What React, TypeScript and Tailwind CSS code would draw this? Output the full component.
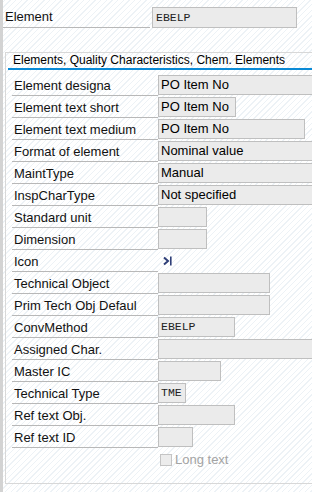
import React from "react";

type Row = {
  label: string;
  value?: string;
  width?: number; // field width in px
  mono?: boolean;
  icon?: boolean;
};

const rows: Row[] = [
  { label: "Element designa", value: "PO Item No", width: 160 },
  { label: "Element text short", value: "PO Item No", width: 78 },
  { label: "Element text medium", value: "PO Item No", width: 147 },
  { label: "Format of element", value: "Nominal value", width: 160 },
  { label: "MaintType", value: "Manual", width: 160 },
  { label: "InspCharType", value: "Not specified", width: 160 },
  { label: "Standard unit", width: 49 },
  { label: "Dimension", width: 49 },
  { label: "Icon", icon: true },
  { label: "Technical Object", width: 112 },
  { label: "Prim Tech Obj Defaul", width: 112 },
  { label: "ConvMethod", value: "EBELP", width: 77, mono: true },
  { label: "Assigned Char.", width: 160 },
  { label: "Master IC", width: 63 },
  { label: "Technical Type", value: "TME", width: 28, mono: true },
  { label: "Ref text Obj.", width: 77 },
  { label: "Ref text ID", width: 35 },
];

function IconGlyph() {
  return (
    <svg width="12" height="12" viewBox="0 0 12 12" className="ml-[4px]">
      <path d="M2 2.5 L6 6 L2 9.5" fill="none" stroke="#2f3f78" strokeWidth="2" />
      <rect x="8" y="1.5" width="1.6" height="9" fill="#2f3f78" />
    </svg>
  );
}

function Field({ row }: { row: Row }) {
  if (row.icon) {
    return (
      <div className="flex h-[20px] items-center">
        <IconGlyph />
      </div>
    );
  }
  return (
    <div
      className="flex h-[20px] shrink-0 items-center border border-[#bfbfbf] bg-[#ebebeb] pl-[2px] text-black"
      style={{ width: row.width }}
    >
      {row.value && (
        <span
          className={
            row.mono
              ? "font-['Liberation_Mono',monospace] text-[11.5px] text-[#222]"
              : ""
          }
        >
          {row.value}
        </span>
      )}
    </div>
  );
}

export default function App() {
  return (
    <div className="flex h-[492px] w-[312px] overflow-hidden bg-[repeating-linear-gradient(135deg,#ffffff_0px,#ffffff_3px,#edf2f6_3px,#edf2f6_4px)] font-['Liberation_Sans',Arial,sans-serif] text-[13px] text-[#111]">
      <div className="w-[3px] shrink-0 bg-[#d3d3d3]" />
      <div className="flex min-w-0 flex-1 flex-col">
        {/* top element row */}
        <div className="mt-[7px] flex">
          <div className="flex h-[21px] w-[147px] shrink-0 items-center border-b border-[#b8b8b8] pl-[2px]">
            Element
          </div>
          <div className="ml-[2px] flex h-[21px] w-[145px] shrink-0 items-center border border-[#bfbfbf] bg-[#ebebeb] pl-[3px]">
            <span className="font-['Liberation_Mono',monospace] text-[11.5px] text-[#222]">
              EBELP
            </span>
          </div>
        </div>

        {/* section box */}
        <div className="ml-[2px] mt-[24px] flex h-[432px] flex-col border-y border-l border-[#d8d8d8]">
          <div className="ml-[2px] flex h-[17px] items-end border-b-2 border-[#0a8ad6] pl-[5px] text-[12px] leading-[16px] text-black">
            Elements, Quality Characteristics, Chem. Elements
          </div>
          <div className="mt-[5px] flex flex-col pl-[6px]">
            {rows.map((row) => (
              <div key={row.label} className="flex h-[22px]">
                <div className="flex h-[21px] w-[146px] shrink-0 items-end border-b border-[#b8b8b8] pb-[2px] pl-[2px] leading-[15px]">
                  {row.label}
                </div>
                <Field row={row} />
              </div>
            ))}
            <div className="flex h-[22px] items-center pl-[148px]">
              <div className="h-[12px] w-[12px] border border-[#c4c4c4] bg-[#ececec]" />
              <span className="ml-[3px] text-[#a3a3a3]">Long text</span>
            </div>
          </div>
        </div>
      </div>
    </div>
  );
}
